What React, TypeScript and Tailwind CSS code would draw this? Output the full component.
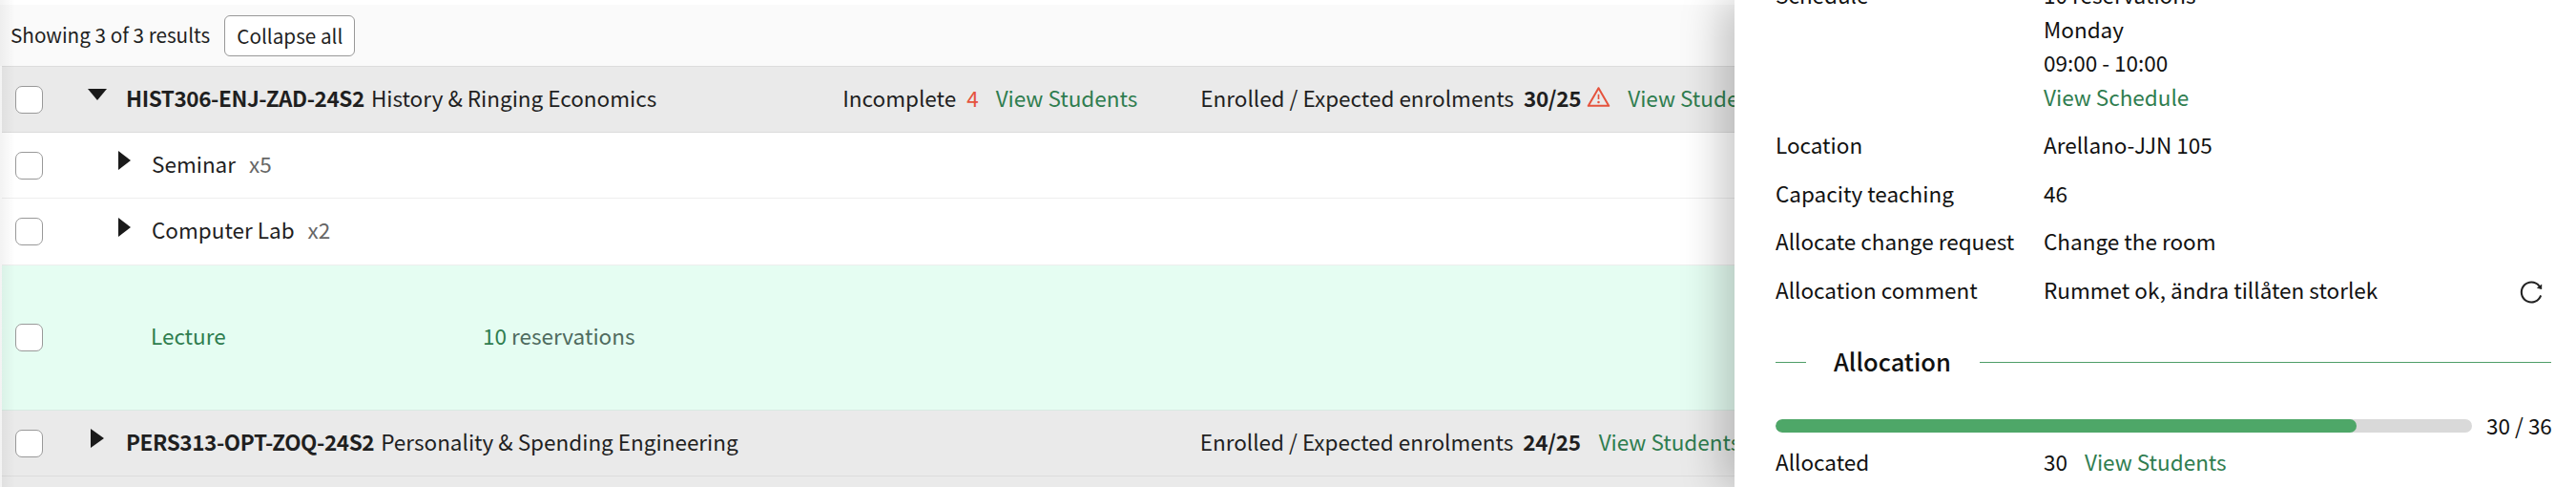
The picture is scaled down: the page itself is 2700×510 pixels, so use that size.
import React from "react";
import { AiOutlineReload, AiOutlineWarning } from "react-icons/ai";

const font = { fontFamily: '"Noto Sans CJK SC", "Noto Sans", sans-serif' };

function Check() {
  return <span className="block w-[29px] h-[29px] shrink-0 rounded-[7px] border border-[#999] bg-white" />;
}

function Tri({ dir, cls }: { dir: "down" | "right"; cls: string }) {
  return (
    <svg className={cls} viewBox="0 0 20 20" preserveAspectRatio="none" fill="#1a1a1a">
      {dir === "down" ? <path d="M0 0H20L10 20Z" /> : <path d="M0 0L20 10L0 20Z" />}
    </svg>
  );
}

function Link({ children, cls = "" }: { children: React.ReactNode; cls?: string }) {
  return <span className={`text-[#2f7d4f] whitespace-nowrap ${cls}`}>{children}</span>;
}

function Row({ label, children }: { label: string; children: React.ReactNode }) {
  return (
    <div className="flex">
      <div className="w-[281px] shrink-0">{label}</div>
      <div className="flex-1">{children}</div>
    </div>
  );
}

export default function App() {
  return (
    <div style={font} className="relative w-[2700px] h-[510px] overflow-hidden bg-white text-[22.5px] leading-[35.5px] text-[#1f1f1f]">
      <div className="h-[5px] bg-white" />
      <div className="h-[64px] pl-[11px] pt-[11px] bg-[#fafafa] flex items-start text-[20.7px]">
        <span className="mt-[3px] whitespace-nowrap">Showing 3 of 3 results</span>
        <button className="ml-[15px] h-[43px] w-[137px] rounded-[6px] border border-[#999] bg-white text-center leading-[39px]">Collapse all</button>
      </div>

      <div className="pl-[2px]">
        <div className="h-[70px] bg-[#eaeaea] border-y border-[#dcdcdc] flex items-center whitespace-nowrap">
          <div className="ml-[14px]"><Check /></div>
          <Tri dir="down" cls="ml-[47px] mb-[10px] w-[20px] h-[12px]" />
          <span className="ml-[20px] mb-[3px] font-semibold tracking-[-0.4px]">HIST306-ENJ-ZAD-24S2</span>
          <span className="ml-[7px] mb-[3px]">History &amp; Ringing Economics</span>
          <span className="ml-[195px] mb-[3px]">Incomplete</span>
          <span className="ml-[11px] mb-[3px] text-[#e5533d]">4</span>
          <Link cls="ml-[18px] mb-[3px]">View Students</Link>
          <span className="ml-[66px] mb-[3px]">Enrolled / Expected enrolments</span>
          <span className="ml-[10px] mb-[3px] font-semibold tracking-[-0.3px]">30/25</span>
          <AiOutlineWarning className="ml-[5px] mb-[6px] w-[27px] h-[27px] text-[#e5533d]" />
          <Link cls="ml-[17px] mb-[3px]">View Students</Link>
        </div>

        <div className="h-[69px] bg-white border-b border-[#eeeeee] flex items-center whitespace-nowrap">
          <div className="ml-[14px]"><Check /></div>
          <Tri dir="right" cls="ml-[79px] mb-[10px] w-[13px] h-[20px]" />
          <span className="ml-[22px] mb-[3px]">Seminar</span>
          <span className="ml-[14px] mb-[3px] text-[#666]">x5</span>
        </div>

        <div className="h-[70px] bg-white border-b border-[#eeeeee] flex items-center whitespace-nowrap">
          <div className="ml-[14px]"><Check /></div>
          <Tri dir="right" cls="ml-[79px] mb-[10px] w-[13px] h-[20px]" />
          <span className="ml-[22px] mb-[3px]">Computer Lab</span>
          <span className="ml-[14px] mb-[3px] text-[#666]">x2</span>
        </div>

        <div className="h-[152px] bg-[#e5fdf2] border-b border-[#d8ebe2] flex items-center whitespace-nowrap">
          <div className="ml-[14px]"><Check /></div>
          <Link cls="ml-[113px] w-[348px] mb-[3px]">Lecture</Link>
          <span className="mb-[3px]"><span className="text-[#2f7d4f]">10</span> <span className="text-[#4f6b5e]">reservations</span></span>
        </div>

        <div className="h-[69px] bg-[#eaeaea] border-b border-[#dcdcdc] flex items-center whitespace-nowrap">
          <div className="ml-[14px]"><Check /></div>
          <Tri dir="right" cls="ml-[50px] mb-[10px] w-[14px] h-[20px]" />
          <span className="ml-[23px] mb-[3px] font-semibold tracking-[-0.4px]">PERS313-OPT-ZOQ-24S2</span>
          <span className="ml-[7px] mb-[3px]">Personality &amp; Spending Engineering</span>
          <span className="ml-[484px] mb-[3px]">Enrolled / Expected enrolments</span>
          <span className="ml-[10px] mb-[3px] font-semibold tracking-[-0.3px]">24/25</span>
          <Link cls="ml-[19px] mb-[3px]">View Students</Link>
        </div>

        <div className="h-[20px] bg-[#eaeaea]" />
      </div>

      <div className="absolute top-0 bottom-0 left-0 w-[16px] bg-gradient-to-r from-black/5 to-transparent" />

      <div className="absolute top-0 bottom-0 right-0 w-[882px] overflow-hidden bg-white pl-[43px] pr-[26px] shadow-[-14px_0_40px_rgba(0,0,0,0.22)] text-[#111]">
        <div className="-mt-[23px]">
          <Row label="Schedule">
            <div>10 reservations</div>
            <div>Monday</div>
            <div>09:00 - 10:00</div>
            <Link cls="block">View Schedule</Link>
          </Row>
          <div className="mt-[15px] flex flex-col gap-[15px]">
            <Row label="Location">Arellano-JJN 105</Row>
            <Row label="Capacity teaching">46</Row>
            <Row label="Allocate change request">Change the room</Row>
            <div className="relative">
              <Row label="Allocation comment">Rummet ok, ändra tillåten storlek</Row>
              <AiOutlineReload className="absolute right-[7px] top-[6px] w-[28px] h-[28px] text-[#222]" />
            </div>
          </div>
          <div className="mt-[38px] flex items-center">
            <div className="w-[32px] h-px bg-[#4f9e68]" />
            <div className="ml-[29px] mr-[30px] text-[25.5px] leading-[37px] pb-[4px] font-medium">Allocation</div>
            <div className="flex-1 h-px bg-[#4f9e68]" />
          </div>
          <div className="mt-[28px] flex items-center">
            <div className="w-[730px] h-[14px] shrink-0 rounded-full bg-[#d9d9d9] overflow-hidden">
              <div className="h-full w-[609px] rounded-full bg-[#4ea768]" />
            </div>
            <div className="ml-[15px] whitespace-nowrap">30 / 36</div>
          </div>
          <div className="mt-[2px]">
            <Row label="Allocated">
              <span>30</span>
              <Link cls="ml-[18px]">View Students</Link>
            </Row>
          </div>
        </div>
      </div>
    </div>
  );
}
